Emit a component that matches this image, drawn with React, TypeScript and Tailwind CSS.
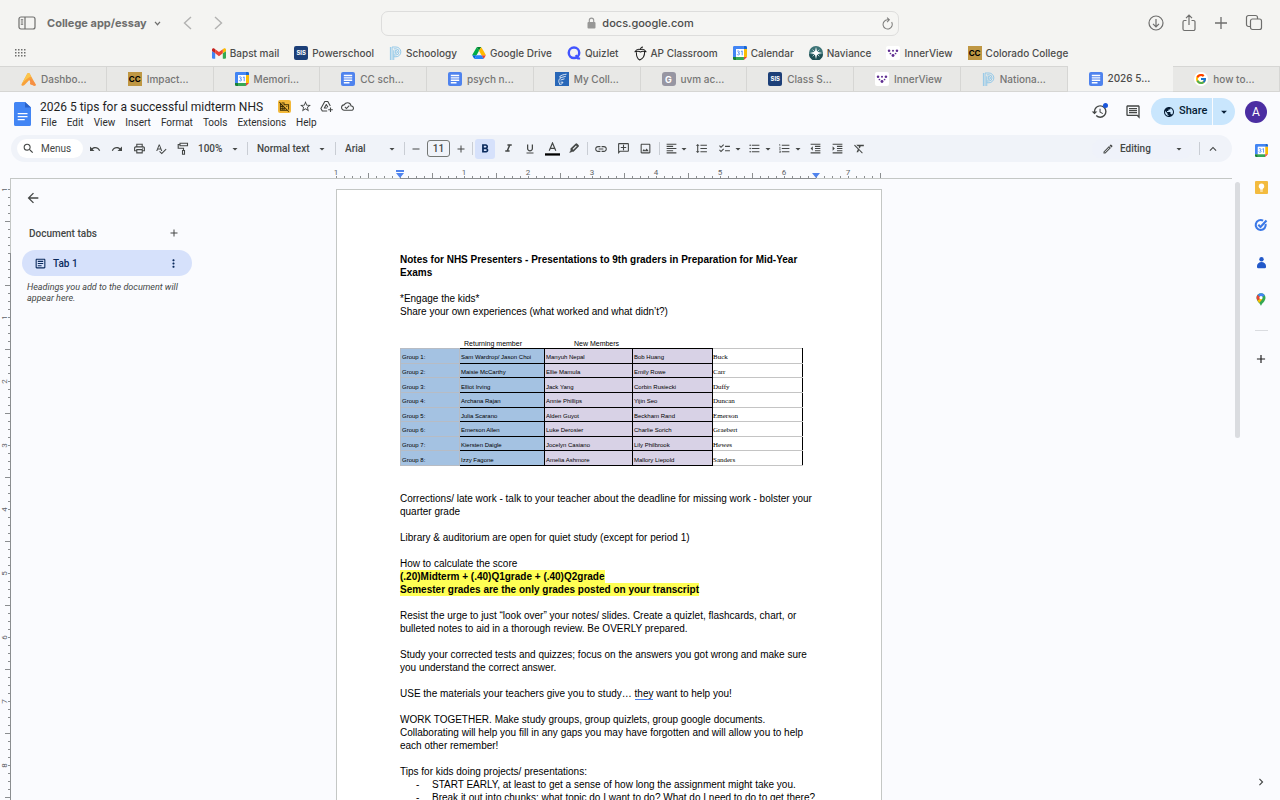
import React from "react";
import {
  MdAdd, MdArrowBack, MdArrowDropDown, MdChecklist, MdChevronRight, MdDomainDisabled,
  MdExpandLess, MdFormatAlignLeft, MdFormatBold, MdFormatClear, MdFormatIndentDecrease,
  MdFormatIndentIncrease, MdFormatItalic, MdFormatLineSpacing, MdFormatListBulleted,
  MdFormatListNumbered, MdFormatUnderlined, MdHistory, MdLink, MdMoreVert,
  MdOutlineAddComment, MdOutlineArticle, MdOutlineCloudDone,
  MdOutlineComment, MdOutlineEdit, MdOutlineImage, MdOutlinePrint, MdPublic, MdRedo,
  MdRemove, MdSearch, MdSpellcheck, MdStarOutline, MdUndo,
} from "react-icons/md";
import { FcGoogle } from "react-icons/fc";

/* ---------- site icons ---------- */

const GmailIcon = () => (
  <svg viewBox="0 0 24 18" className="h-[11px] w-[14px] shrink-0">
    <path fill="#4285f4" d="M1.6 18h3.9V8.6L0 4.5v11.9C0 17.300.7 18 1.600 18z" />
    <path fill="#34a853" d="M18.500 18h3.900c.9 0 1.600-.7 1.600-1.600V4.500l-5.500 4.100z" />
    <path fill="#fbbc04" d="M18.500 1.600v7L24 4.500V2.300c0-2-2.300-3.200-3.900-2z" />
    <path fill="#ea4335" d="M5.500 8.600v-7L12 6.500l6.500-4.900v7L12 13.500z" />
    <path fill="#c5221f" d="M0 2.300v2.200l5.500 4.100v-7L3.900.300C2.300-.9 0 .3 0 2.300z" />
  </svg>
);

const SisIcon = () => (
  <span className="flex size-[14px] shrink-0 items-center justify-center rounded-[2px] bg-[#1c3f78] text-[6px] leading-none font-bold text-white">
    SIS
  </span>
);

const CcIcon = () => (
  <span className="flex size-[14px] shrink-0 items-center justify-center bg-[#bf9743] font-['Inter',sans-serif] text-[8px] leading-none font-bold text-black">
    CC
  </span>
);

const GrayGIcon = () => (
  <span className="flex size-[14px] shrink-0 items-center justify-center rounded-[3px] bg-[#9796a2] text-[9px] leading-none font-bold text-white">
    G
  </span>
);

const PowerIcon = () => (
  <svg viewBox="0 0 14 16" className="h-[15px] w-[13px] shrink-0" fill="none" stroke="#8cc6e8" strokeWidth="1">
    <path d="M1.500 1v14M3.300 1v14M5.100 4.500V15" />
    <path d="M3.300 1H7.500a5 5 0 0 1 0 10.500H5.100" />
    <path d="M5.100 3H7.500a3.200 3.200 0 0 1 0 6.600H5.100" />
    <path d="M6.800 4.800h.8a1.500 1.500 0 0 1 0 3h-.8z" />
  </svg>
);

const DriveIcon = () => (
  <svg viewBox="0 0 87 78" className="h-[12px] w-[14px] shrink-0">
    <path fill="#0066da" d="M6.600 66.900l3.900 6.600c.8 1.400 2 2.500 3.300 3.300L27.500 53H0c0 1.500.4 3.100 1.200 4.500z" />
    <path fill="#00ac47" d="M43.600 25L29.900 1.200c-1.300.8-2.500 1.900-3.300 3.300L1.200 48.500C.4 49.900 0 51.500 0 53h27.500z" />
    <path fill="#ea4335" d="M73.500 76.800c1.400-.8 2.500-1.900 3.300-3.300l9.300-16c.8-1.400 1.200-3 1.200-4.500H59.800l5.900 11.500z" />
    <path fill="#00832d" d="M43.600 25L57.400 1.200C56 .4 54.500 0 52.900 0H34.400c-1.600 0-3.200.4-4.500 1.200z" />
    <path fill="#2684fc" d="M59.800 53H27.500L13.800 76.800c1.300.8 2.900 1.200 4.500 1.200H69c1.600 0 3.200-.4 4.500-1.200z" />
    <path fill="#ffba00" d="M73.400 26.500L60.700 4.500c-.8-1.400-2-2.500-3.300-3.300L43.600 25l16.200 28h27.500c0-1.500-.4-3.100-1.200-4.500z" />
  </svg>
);

const QuizletIcon = () => (
  <svg viewBox="0 0 16 16" className="size-[14px] shrink-0" fill="none" stroke="#4255ff">
    <circle cx="8" cy="7.800" r="6" strokeWidth="2.800" />
    <path d="M10 10.500l2.500 3.700h2.500" strokeWidth="2.400" />
  </svg>
);

const AcornIcon = () => (
  <svg viewBox="0 0 14 16" className="h-[15px] w-[13px] shrink-0" fill="none" stroke="#1e1e1e" strokeWidth="1.100" strokeLinejoin="round">
    <path d="M1 6.200C2.500 3.800 5 3.200 7 3.800c2-.8 4.500-.1 6 2.400-3-1.200-4.600-1-6 .2-1.400-1.200-3-1.400-6-.2z" />
    <path d="M2.600 6.600c-.2 4 1.200 7 3.600 8.400 3-1.400 5.400-4.400 5.200-8.700M7 3.800C7 2.200 8 1 9.700.900" />
  </svg>
);

const CalendarIcon = ({ className = "size-[14px]" }: { className?: string }) => (
  <svg viewBox="0 0 16 16" className={`${className} shrink-0`}>
    <path fill="#4285f4" d="M1.500 0H12.500V3.500H3.500V12.500H0V1.500A1.500 1.500 0 0 1 1.500 0z" />
    <path fill="#1967d2" d="M12.500 0h2A1.500 1.500 0 0 1 16 1.500v2h-3.500z" />
    <path fill="#fbbc04" d="M12.500 3.500H16v9h-3.500z" />
    <path fill="#34a853" d="M3.500 12.500h9V16h-9z" />
    <path fill="#188038" d="M0 12.500h3.500V16h-2A1.500 1.500 0 0 1 0 14.500z" />
    <path fill="#ea4335" d="M12.500 12.500H16L12.500 16z" />
    <path fill="#fff" d="M3.500 3.500h9v9h-9z" />
    <path fill="none" stroke="#4285f4" strokeWidth="1" d="M4.800 6.200c.3-.8 2.500-.9 2.500.500 0 .8-.7 1.100-1.300 1.100.8 0 1.500.4 1.500 1.300 0 1.500-2.500 1.500-2.900.3M9 6.400l1.500-.8v5" />
  </svg>
);

const NavianceIcon = () => (
  <svg viewBox="0 0 16 16" className="size-[14px] shrink-0">
    <circle cx="8" cy="8" r="8" fill="#3c7376" />
    <path fill="#1f5054" d="M0 9a8 8 0 0 0 16 0l-8 1.500z" />
    <path fill="#fff" d="M8 1l1.300 5.700L15 8l-5.700 1.300L8 15 6.700 9.300 1 8l5.700-1.300z" />
    <path stroke="#fff" strokeWidth=".8" d="M4.200 4.200l7.600 7.600M11.800 4.200l-7.600 7.600" />
  </svg>
);

const InnerViewIcon = () => (
  <span className="flex size-[14px] shrink-0 items-center justify-center rounded-[2px] bg-white">
    <svg viewBox="0 0 14 14" className="size-[12px]" fill="#5f2d91">
      <circle cx="2.400" cy="4.300" r="1.500" />
      <circle cx="7" cy="4.300" r="1.200" />
      <circle cx="11.600" cy="4.300" r="1.500" />
      <circle cx="4" cy="7.600" r="1" />
      <circle cx="10" cy="7.600" r="1" />
      <circle cx="7" cy="10" r="1.700" />
    </svg>
  </span>
);

const OrangeIcon = () => (
  <svg viewBox="0 0 16 14" className="h-[13px] w-[15px] shrink-0">
    <path fill="#f8a13b" d="M6.500 1.200c.5-1.400 2.400-1.500 3 0L15.600 12c.5 1-.3 2-1.500 1.700L9.600 11.800c.7-1.600.5-3.200-.7-4.200L3.700 13c-1.400 1.400-3.900.9-3.200-1z" />
    <path fill="#f58f45" d="M15.600 12c.5 1-.3 2-1.500 1.700L9.600 11.800c.8-1.800.4-3.300-.7-4.200l1.200-1.200c2 .9 3.900 3 5.500 5.600z" />
    <path fill="#fbc64c" d="M6.500 1.200c.5-1.400 2.400-1.500 3 0l1.400 2.500C8 4.800 3.500 8 .6 11.900z" />
  </svg>
);

const DocsSquareIcon = () => (
  <svg viewBox="0 0 14 14" className="size-[14px] shrink-0">
    <rect width="14" height="14" rx="2" fill="#4f83ee" />
    <path stroke="#fff" strokeWidth="1.400" d="M2.800 3.500h8.400M2.800 5.900h8.400M2.800 8.300h8.400M2.800 10.700h5.700" />
  </svg>
);

const CollegeIcon = () => (
  <svg viewBox="0 0 14 14" className="size-[14px] shrink-0">
    <rect width="14" height="14" fill="#2867b8" />
    <path fill="none" stroke="#fff" strokeWidth=".8" d="M11.500 2.200C8.500 2.500 6 3.200 4.500 4.800l1.800.7M10.800 4.300L6.300 5.500C3.500 7 3 10 5 12M9.500 6.800L5.500 8M4 12c1.500.8 3.200.3 4-1.800H5.600" />
  </svg>
);

const GoogleIcon = () => (
  <span className="flex size-[14px] shrink-0 items-center justify-center rounded-full bg-white">
    <FcGoogle className="size-[12px]" />
  </span>
);

/* ---------- browser chrome ---------- */

const bookmarks: { label: string; icon: React.ReactNode }[] = [
  { label: "Bapst mail", icon: <GmailIcon /> },
  { label: "Powerschool", icon: <SisIcon /> },
  { label: "Schoology", icon: <PowerIcon /> },
  { label: "Google Drive", icon: <DriveIcon /> },
  { label: "Quizlet", icon: <QuizletIcon /> },
  { label: "AP Classroom", icon: <AcornIcon /> },
  { label: "Calendar", icon: <CalendarIcon /> },
  { label: "Naviance", icon: <NavianceIcon /> },
  { label: "InnerView", icon: <InnerViewIcon /> },
  { label: "Colorado College", icon: <CcIcon /> },
];

const tabs: { label: string; icon: React.ReactNode; active?: boolean }[] = [
  { label: "Dashbo...", icon: <OrangeIcon /> },
  { label: "Impact...", icon: <CcIcon /> },
  { label: "Memori...", icon: <CalendarIcon /> },
  { label: "CC sch...", icon: <DocsSquareIcon /> },
  { label: "psych n...", icon: <DocsSquareIcon /> },
  { label: "My Coll...", icon: <CollegeIcon /> },
  { label: "uvm ac...", icon: <GrayGIcon /> },
  { label: "Class S...", icon: <SisIcon /> },
  { label: "InnerView", icon: <InnerViewIcon /> },
  { label: "Nationa...", icon: <PowerIcon /> },
  { label: "2026 5...", icon: <DocsSquareIcon />, active: true },
  { label: "how to...", icon: <GoogleIcon /> },
];

function BrowserChrome() {
  return (
    <div className="shrink-0 bg-[#f4f4f2] font-['Inter',sans-serif] text-[#4c4c4b]">
      <div className="grid h-[40px] grid-cols-[1fr_518px_1fr] items-center pt-[6px]">
        <div className="flex items-center pl-[18px] text-[#6e6e6d]">
          <button aria-label="Sidebar">
            <svg viewBox="0 0 18 14" className="h-[14px] w-[18px]" fill="none" stroke="currentColor" strokeWidth="1.200">
              <rect x="1" y="1" width="16" height="12" rx="2" />
              <path d="M7 1v12M2.800 3.800h2.400M2.800 6h2.400M2.800 8.200h2.400" />
            </svg>
          </button>
          <button className="ml-[11px] flex items-center gap-[7px] text-[11px] font-bold">
            College app/essay
            <svg viewBox="0 0 8 6" className="h-[5px] w-[7px]" fill="none" stroke="currentColor" strokeWidth="1.500"><path d="M1 1l3 3.500L7 1" /></svg>
          </button>
          <button aria-label="Back" className="ml-[22px]">
            <svg viewBox="0 0 9 14" className="h-[14px] w-[9px]" fill="none" stroke="#b2b2b1" strokeWidth="1.400"><path d="M8 1L1.500 7 8 13" /></svg>
          </button>
          <button aria-label="Forward" className="ml-[22px]">
            <svg viewBox="0 0 9 14" className="h-[14px] w-[9px]" fill="none" stroke="#b2b2b1" strokeWidth="1.400"><path d="M1 1l6.500 6L1 13" /></svg>
          </button>
        </div>
        <div className="flex h-[25px] items-center rounded-[7px] border border-[#dddddc] bg-[#f5f5f3] px-[5px]">
          <span className="w-[12px]" />
          <span className="flex flex-1 items-center justify-center gap-[6px] text-[11px] font-medium text-[#4c4c4b]">
            <svg viewBox="0 0 9 12" className="h-[12px] w-[9px]">
              <rect x=".5" y="5" width="8" height="6.500" rx="1" fill="#979796" />
              <path d="M2.300 5.500V3.300a2.200 2.200 0 0 1 4.400 0v2.200" fill="none" stroke="#979796" strokeWidth="1.100" />
            </svg>
            docs.google.com
          </span>
          <button aria-label="Reload">
            <svg viewBox="0 0 12 14" className="h-[13px] w-[11px]" fill="none" stroke="#7c7c7b" strokeWidth="1.100">
              <path d="M10.500 5.500A5 5 0 1 1 6 3h1.500M5.500.700L8 3 5.500 5.500" />
            </svg>
          </button>
        </div>
        <div className="flex items-center justify-end gap-[17px] pr-[17px] text-[#6e6e6d]">
          <button aria-label="Downloads">
            <svg viewBox="0 0 16 16" className="size-[16px]" fill="none" stroke="currentColor" strokeWidth="1.200"><circle cx="8" cy="8" r="7" /><path d="M8 4v7.500M5 8.800l3 3 3-3" /></svg>
          </button>
          <button aria-label="Share page">
            <svg viewBox="0 0 16 18" className="h-[18px] w-[16px]" fill="none" stroke="currentColor" strokeWidth="1.200"><path d="M5.500 6.500H3.500A1.500 1.500 0 0 0 2 8v7a1.500 1.500 0 0 0 1.500 1.500h9A1.500 1.500 0 0 0 14 15V8a1.500 1.500 0 0 0-1.500-1.500h-2M8 11V1.500M5 4.200l3-3 3 3" /></svg>
          </button>
          <button aria-label="New tab">
            <svg viewBox="0 0 14 14" className="size-[14px]" fill="none" stroke="currentColor" strokeWidth="1.300"><path d="M7 1v12M1 7h12" /></svg>
          </button>
          <button aria-label="Tab overview">
            <svg viewBox="0 0 18 18" className="size-[18px]" fill="none" stroke="currentColor" strokeWidth="1.200"><rect x="5.500" y="5" width="11" height="10.500" rx="2" /><path d="M5.500 12.500H3.500a2 2 0 0 1-2-2V3.500a2 2 0 0 1 2-2h7a2 2 0 0 1 2 2V5" /></svg>
          </button>
        </div>
      </div>
      <div className="grid h-[26px] grid-cols-[40px_1fr_40px] items-center">
        <button aria-label="Show all bookmarks" className="pl-[15px]">
          <svg viewBox="0 0 11 8" className="h-[8px] w-[11px]" fill="#6e6e6d">
            {[0, 1, 2, 3].flatMap((c) => [0, 1, 2].map((r) => <rect key={`${c}-${r}`} x={c * 3} y={r * 3} width="1.500" height="1.500" />))}
          </svg>
        </button>
        <nav className="flex items-center justify-center gap-[15px] text-[10px] font-medium whitespace-nowrap">
          {bookmarks.map((b) => (
            <a key={b.label} href="#" className="flex items-center gap-[4px]">{b.icon}{b.label}</a>
          ))}
        </nav>
        <span />
      </div>
      <div role="tablist" className="flex h-[26px]">
        {tabs.map((t) => (
          <button
            key={t.label}
            role="tab"
            aria-selected={!!t.active}
            className={
              t.active
                ? "flex flex-1 items-center gap-[5px] border-b border-[#dfe1e3] pl-[21px] text-[10px] font-medium text-[#4c4c4b]"
                : "flex flex-1 items-center gap-[5px] border-t border-r border-b border-[#d6d6d4] bg-[#e8e8e6] pl-[21px] text-[10px] font-medium text-[#757574]"
            }
          >
            {t.icon}{t.label}
          </button>
        ))}
      </div>
    </div>
  );
}

/* ---------- docs header ---------- */

const menus = ["File", "Edit", "View", "Insert", "Format", "Tools", "Extensions", "Help"];

function DocsHeader() {
  return (
    <header className="flex h-[43px] shrink-0 items-start pt-[6px] pr-[13px] pl-[14px]">
      <a href="#" aria-label="Docs home" className="mt-[4px]">
        <svg viewBox="0 0 17 24" className="h-[24px] w-[17px]">
          <path fill="#4285f4" d="M1.500 0H11l6 5.500v17A1.500 1.500 0 0 1 15.500 24h-14A1.500 1.500 0 0 1 0 22.500v-21A1.500 1.500 0 0 1 1.500 0z" />
          <path fill="#2a62c9" d="M11 0l6 5.500h-6z" />
          <path stroke="#fff" strokeWidth="1.300" d="M3.700 11.700h9.800M3.700 14.700h9.800M3.700 17.700h7" />
        </svg>
      </a>
      <div className="ml-[9px]">
        <div className="flex h-[17px] items-center text-[#444746]">
          <h1 className="font-['Roboto',sans-serif] text-[12px] text-[#1f1f1f]">2026 5 tips for a successful midterm NHS</h1>
          <span className="ml-[15px] flex size-[13px] items-center justify-center rounded-[2px] bg-[#f2b93b] text-[#3b2c05]"><MdDomainDisabled className="size-[11px]" /></span>
          <button aria-label="Star" className="ml-[8px]"><MdStarOutline className="size-[13px]" /></button>
          <button aria-label="Add to Drive" className="ml-[8px]">
            <svg viewBox="0 0 13 13" className="size-[13px]" fill="none" stroke="currentColor" strokeWidth="1.100" strokeLinejoin="round">
              <path d="M7.200 11H2.300L.9 8.500 4.800 1.500h3l2.500 4.500M7.200 8H4.300L6.300 4.500l1.600 2.800M10.500 7.500v4.600M8.200 9.800h4.600" />
            </svg>
          </button>
          <button aria-label="Document status" className="ml-[8px]"><MdOutlineCloudDone className="size-[13px]" /></button>
        </div>
        <nav className="flex h-[14px] items-center gap-[10px] pl-[1px] text-[10px] text-[#2c2d2e]">
          {menus.map((m) => <button key={m}>{m}</button>)}
        </nav>
      </div>
      <div className="ml-auto flex h-[27px] items-center text-[#444746]">
        <button aria-label="Version history" className="relative">
          <MdHistory className="size-[17px]" />
          <span className="absolute top-0 right-0 size-[5px] rounded-full bg-[#1a56db]" />
        </button>
        <button aria-label="Comments" className="ml-[17px]"><MdOutlineComment className="size-[16px]" /></button>
        <div className="ml-[10px] flex h-[27px] items-stretch gap-px text-[#061d35]">
          <button className="flex w-[61px] items-center gap-[4px] rounded-l-full bg-[#c9e6fd] pl-[12px] text-[11px] font-medium"><MdPublic className="size-[12px]" />Share</button>
          <button aria-label="Share options" className="flex w-[22px] items-center justify-center rounded-r-full bg-[#c9e6fd]"><MdArrowDropDown className="size-[14px]" /></button>
        </div>
        <button aria-label="Account" className="ml-[10px] flex size-[22px] items-center justify-center rounded-full bg-[#4b2ea2] text-[12px] text-white">A</button>
      </div>
    </header>
  );
}

/* ---------- toolbar ---------- */

function Tool({ label, children }: { label: string; children: React.ReactNode }) {
  return <button aria-label={label} className="flex h-[20px] w-[22px] items-center justify-center">{children}</button>;
}

const Divider = () => <span className="h-[13px] w-px shrink-0 bg-[#c9cdd4]" />;
const Caret = () => <MdArrowDropDown className="pointer-events-none size-[12px] shrink-0" />;

function Picker({ label, value, className }: { label: string; value: string; className: string }) {
  return (
    <label className="flex items-center">
      <select aria-label={label} className={`${className} appearance-none bg-transparent`}>
        <option>{value}</option>
      </select>
      <Caret />
    </label>
  );
}

function Toolbar() {
  return (
    <div className="mr-[10px] ml-[11px] flex h-[27px] shrink-0 items-center rounded-full bg-[#f0f3f9] pl-[6px] text-[10px] font-medium text-[#444746]">
      <button className="flex h-[19px] w-[66px] items-center gap-[6px] rounded-full bg-white pl-[5px] font-normal"><MdSearch className="size-[13px]" />Menus</button>
      <div className="ml-[1px] flex">
        <Tool label="Undo"><MdUndo className="size-[12px]" /></Tool>
        <Tool label="Redo"><MdRedo className="size-[12px]" /></Tool>
        <Tool label="Print"><MdOutlinePrint className="size-[13px]" /></Tool>
        <Tool label="Spelling"><MdSpellcheck className="size-[12px]" /></Tool>
        <Tool label="Paint format">
          <svg viewBox="0 0 12 13" className="h-[13px] w-[12px]" fill="none" stroke="currentColor" strokeWidth="1.100"><path d="M3 1.200h7.500v2.600H3zM3 2.500H1.200v3.700h5.300v2.300M5.500 8.500h2v3.700h-2z" /></svg>
        </Tool>
      </div>
      <div className="ml-[4px] flex items-center">
        <Picker label="Zoom" value="100%" className="w-[31px]" />
        <span className="mr-[9px] ml-[6px] flex"><Divider /></span>
        <Picker label="Styles" value="Normal text" className="w-[59px]" />
        <span className="mr-[9px] ml-[7px] flex"><Divider /></span>
        <Picker label="Font" value="Arial" className="w-[41px]" />
        <span className="ml-[6px] flex"><Divider /></span>
      </div>
      <Tool label="Decrease font size"><MdRemove className="size-[12px]" /></Tool>
      <input aria-label="Font size" defaultValue="11" className="h-[17px] w-[23px] rounded-[3px] border border-[#747775] bg-transparent text-center" />
      <Tool label="Increase font size"><MdAdd className="size-[12px]" /></Tool>
      <Divider />
      <button aria-label="Bold" className="mx-[2px] flex size-[20px] items-center justify-center rounded-[3px] bg-[#d6e1fb] text-[#0a2a5c]"><MdFormatBold className="size-[14px]" /></button>
      <Tool label="Italic"><MdFormatItalic className="size-[13px]" /></Tool>
      <Tool label="Underline"><MdFormatUnderlined className="size-[12px]" /></Tool>
      <Tool label="Text color">
        <svg viewBox="0 0 15 14" className="h-[14px] w-[15px]"><path d="M4.200 8.800L7.500 1l3.300 7.800M5.300 6.400h4.400" fill="none" stroke="currentColor" strokeWidth="1.200" /><path d="M0 11.300h15v2.300H0z" fill="#000" /></svg>
      </Tool>
      <Tool label="Highlight color">
        <svg viewBox="0 0 12 12" className="size-[12px]"><path d="M2.500 5.500L7.500.800a1.200 1.200 0 0 1 1.700 0l1.300 1.300a1.200 1.200 0 0 1 0 1.700L5.500 8.800H3.800l-.8.800H1l1.500-1.500z" fill="currentColor" /><path d="M4.500 6l3.500-3.500.8.800-3.500 3.500z" fill="#f0f3f9" /></svg>
      </Tool>
      <span className="mx-[2px] flex"><Divider /></span>
      <Tool label="Insert link"><MdLink className="size-[14px]" /></Tool>
      <Tool label="Add comment"><MdOutlineAddComment className="size-[13px] -scale-x-100" /></Tool>
      <Tool label="Insert image"><MdOutlineImage className="size-[13px]" /></Tool>
      <span className="mr-[5px] ml-[3px] flex"><Divider /></span>
      <button aria-label="Align" className="flex items-center"><MdFormatAlignLeft className="size-[13px]" /><Caret /></button>
      <Tool label="Line spacing"><MdFormatLineSpacing className="size-[13px]" /></Tool>
      <button aria-label="Checklist" className="ml-[6px] flex items-center gap-[1px]"><MdChecklist className="size-[13px]" /><Caret /></button>
      <button aria-label="Bulleted list" className="ml-[4px] flex items-center gap-[1px]"><MdFormatListBulleted className="size-[13px]" /><Caret /></button>
      <button aria-label="Numbered list" className="ml-[4px] flex items-center gap-[1px]"><MdFormatListNumbered className="size-[13px]" /><Caret /></button>
      <Tool label="Decrease indent"><MdFormatIndentDecrease className="size-[13px]" /></Tool>
      <Tool label="Increase indent"><MdFormatIndentIncrease className="size-[13px]" /></Tool>
      <Tool label="Clear formatting"><MdFormatClear className="size-[13px]" /></Tool>
      <div className="mr-[7px] ml-auto flex h-[20px] items-center gap-[6px] rounded-full bg-[#eff2fa] pr-[7px] pl-[10px]">
        <MdOutlineEdit className="size-[12px]" />
        <Picker label="Mode" value="Editing" className="w-[53px]" />
      </div>
      <Divider />
      <button aria-label="Hide menus" className="mr-[12px] ml-[6px]"><MdExpandLess className="size-[14px]" /></button>
    </div>
  );
}

/* ---------- rulers (64px to an inch, eight ticks each) ---------- */

const hTicks = Array.from({ length: 69 }, (_, i) => i);
const vTicks = Array.from({ length: 78 }, (_, i) => i);

function HorizontalRuler() {
  return (
    <div className="mr-[10px] ml-[10px] shrink-0 border-b border-[#c4c7c5] pl-[320px]">
      <svg viewBox="0 0 560 17" className="-mb-px block h-[17px] w-[560px] font-['Roboto',sans-serif]">
        {hTicks.map((i) => (
          <rect key={i} x={6 + i * 8} y={i % 8 === 4 ? 11 : 14} width="1" height={i % 8 === 4 ? 5 : 2} fill="#8b8e90" />
        ))}
        <rect x="70" y="16" width="416" height="1" fill="#8b8e90" />
        {[1, 0, 1, 2, 3, 4, 5, 6, 7].map((n, i) =>
          n ? <text key={i} x={6 + i * 64} y="13" textAnchor="middle" fontSize="8" fill="#5f6368">{n}</text> : null
        )}
        <path fill="#4f83ee" d="M66 8h8v2h-8zM66 11h8l-4 5zM482 11h8l-4 5z" />
      </svg>
    </div>
  );
}

function VerticalRuler() {
  return (
    <div className="w-[11px] shrink-0 border-r border-[#c4c7c5]">
      <svg viewBox="0 0 11 621" className="-mr-px block h-[621px] w-[11px] max-w-none font-['Roboto',sans-serif]">
        {vTicks.map((i) => (
          <rect key={i} x={i % 8 === 4 ? 5 : 8} y={10 + i * 8} width={i % 8 === 4 ? 5 : 2} height="1" fill="#8b8e90" />
        ))}
        <rect x="10" y="74" width="1" height="547" fill="#8b8e90" />
        {[1, 0, 1, 2, 3, 4, 5, 6, 7, 8].map((n, i) =>
          n ? <text key={i} transform={`translate(7 ${10.5 + i * 64}) rotate(-90)`} textAnchor="middle" fontSize="8" fill="#5f6368">{n}</text> : null
        )}
      </svg>
    </div>
  );
}

/* ---------- outline ---------- */

function Outline() {
  return (
    <aside className="w-[325px] shrink-0 pt-[11px] pl-[11px] text-[#444746]">
      <button aria-label="Close outline" className="ml-[3px] flex"><MdArrowBack className="size-[16px]" /></button>
      <div className="mt-[20px] flex h-[14px] w-[158px] items-center justify-between pl-[7px]">
        <h2 className="text-[10px] font-medium">Document tabs</h2>
        <button aria-label="Add tab"><MdAdd className="size-[12px]" /></button>
      </div>
      <div className="mt-[10px] flex h-[26px] w-[170px] items-center rounded-full bg-[#d6e1fb] px-[12px] text-[#0a2a5c]">
        <MdOutlineArticle className="size-[13px]" />
        <a href="#" className="ml-[6px] flex-1 text-[10px] font-medium">Tab 1</a>
        <button aria-label="Tab options"><MdMoreVert className="size-[13px]" /></button>
      </div>
      <p className="mt-[6px] w-[165px] pl-[5px] text-[9px] leading-[11px] italic">Headings you add to the document will appear here.</p>
    </aside>
  );
}

/* ---------- document ---------- */

const groups = [
  ["Sam Wardrop/ Jason Choi", "Manyuh Nepal", "Bob Huang", "Buck"],
  ["Maisie McCarthy", "Ellie Mamula", "Emily Rowe", "Carr"],
  ["Elliot Irving", "Jack Yang", "Corbin Rusiecki", "Duffy"],
  ["Archana Rajan", "Annie Phillips", "Yijin Seo", "Duncan"],
  ["Julia Scarano", "Alden Guyot", "Beckham Rand", "Emerson"],
  ["Emerson Allen", "Luke Derosier", "Charlie Sorich", "Graebert"],
  ["Kiersten Daigle", "Jocelyn Casiano", "Lily Philbrook", "Hewes"],
  ["Izzy Fagone", "Amelia Ashmore", "Mallory Liepold", "Sanders"],
];

function GroupTable() {
  return (
    <div className="pt-[21px] pb-[26px]">
      <div className="flex h-[9px] gap-[52px] pl-[64px] text-[7px] leading-[9px]"><span>Returning member</span><span>New Members</span></div>
      <table className="h-[118px] w-[402px] table-fixed border-collapse text-[6px] leading-[8px]">
        <colgroup><col className="w-[59px]" /><col className="w-[85px]" /><col className="w-[88px]" /><col className="w-[80px]" /><col className="w-[90px]" /></colgroup>
        <tbody>
          {groups.map((g, i) => (
            <tr key={i}>
              <th scope="row" className="border border-[#b7bcc4] bg-[#a4c2e2] p-0 pt-[3px] pl-[1px] text-left font-normal">Group {i + 1}:</th>
              <td className="border border-black bg-[#a4c2e2] p-0 pt-[3px] pl-[1px]">{g[0]}</td>
              <td className="border border-black bg-[#d8d2e6] p-0 pt-[3px] pl-[1px]">{g[1]}</td>
              <td className="border border-black bg-[#d8d2e6] p-0 pt-[3px] pl-[1px]">{g[2]}</td>
              <td className="border-y border-r border-y-[#c4c4c4] border-r-black p-0 pt-[3px] font-['Liberation_Serif',serif] text-[7px]">{g[3]}</td>
            </tr>
          ))}
        </tbody>
      </table>
    </div>
  );
}

function Page() {
  return (
    <article className="mt-[10px] w-[546px] shrink-0 self-stretch border border-b-0 border-[#c4c7c5] bg-white pt-[63px] pr-[63px] pl-[63px] font-['Liberation_Sans',Arial,sans-serif] text-[10px] leading-[13px] text-black">
      <p className="mb-[13px] font-bold">Notes for NHS Presenters - Presentations to 9th graders in Preparation for Mid-Year Exams</p>
      <p>*Engage the kids*</p>
      <p>Share your own experiences (what worked and what didn’t?)</p>
      <GroupTable />
      <p className="mb-[13px]">Corrections/ late work - talk to your teacher about the deadline for missing work - bolster your quarter grade</p>
      <p className="mb-[13px]">Library &amp; auditorium are open for quiet study (except for period 1)</p>
      <p>How to calculate the score</p>
      <p className="mb-[13px] font-bold">
        <mark className="bg-[#ffff54] py-px">(.20)Midterm + (.40)Q1grade + (.40)Q2grade</mark><br />
        <mark className="bg-[#ffff54] py-px">Semester grades are the only grades posted on your transcript</mark>
      </p>
      <p className="mb-[13px]">Resist the urge to just “look over” your notes/ slides. Create a quizlet, flashcards, chart, or bulleted notes to aid in a thorough review. Be OVERLY prepared.</p>
      <p className="mb-[13px]">Study your corrected tests and quizzes; focus on the answers you got wrong and make sure you understand the correct answer.</p>
      <p className="mb-[13px]">USE the materials your teachers give you to study… <span className="border-b border-[#4f83ee]">they</span> want to help you!</p>
      <p className="mb-[13px]">WORK TOGETHER. Make study groups, group quizlets, group google documents.<br />Collaborating will help you fill in any gaps you may have forgotten and will allow you to help each other remember!</p>
      <p>Tips for kids doing projects/ presentations:</p>
      <ul className="whitespace-nowrap">
        <li className="flex"><span className="w-[32px] pl-[16px]">-</span>START EARLY, at least to get a sense of how long the assignment might take you.</li>
        <li className="flex"><span className="w-[32px] pl-[16px]">-</span>Break it out into chunks: what topic do I want to do? What do I need to do to get there?</li>
      </ul>
    </article>
  );
}

/* ---------- side rail ---------- */

function SideRail() {
  return (
    <aside className="flex w-[38px] shrink-0 flex-col items-center gap-[24px] pt-[9px] pb-[11px]">
      <button aria-label="Calendar"><CalendarIcon className="block size-[13px]" /></button>
      <button aria-label="Keep">
        <svg viewBox="0 0 13 13" className="block size-[13px]"><rect width="13" height="13" rx="1" fill="#f3bb3f" /><circle cx="6.500" cy="5.300" r="2.700" fill="#fff" /><path d="M5.200 7h2.600v1.800H5.200zM5.200 9.500h2.600v1H5.200z" fill="#fff" /></svg>
      </button>
      <button aria-label="Tasks">
        <svg viewBox="0 0 14 14" className="block size-[14px]" fill="none" stroke="#3b78e7" strokeWidth="2.100"><path d="M11.600 6a5 5 0 1 1-2.500-3.400" /><path d="M4.300 6.700l2.200 2.200L12.500 2.500" /></svg>
      </button>
      <button aria-label="Contacts">
        <svg viewBox="0 0 13 13" className="block size-[13px]" fill="#2258c9"><circle cx="6.500" cy="3.200" r="2.200" /><path d="M2 10a4.500 4 0 0 1 9 0v1a1.200 1.200 0 0 1-1.200 1.200H3.200A1.200 1.200 0 0 1 2 11z" /></svg>
      </button>
      <button aria-label="Maps">
        <svg viewBox="0 0 10 13" className="block h-[13px] w-[10px]">
          <path fill="#34a853" d="M5 13C4.600 10.500.5 8.500.5 4.700a4.500 4.500 0 0 1 9 0C9.500 8.500 5.400 10.500 5 13z" />
          <path fill="#fbbc04" d="M1.500 7.500L5 4.700l1.200 1.800-3 3.500z" />
          <path fill="#ea4335" d="M5 4.700L1.500 7.500C.3 5.600.2 3.300 1.600 1.700z" />
          <path fill="#4285f4" d="M1.600 1.700A4.500 4.500 0 0 1 8.800 2.200L5 4.700z" />
          <circle cx="5" cy="4.700" r="1.600" fill="#fff" />
        </svg>
      </button>
      <span className="h-px w-[13px] bg-[#dadce0]" />
      <button aria-label="Get add-ons" className="-mt-[3px] text-[#1f1f1f]"><MdAdd className="size-[14px]" /></button>
      <button aria-label="Hide side panel" className="mt-auto text-[#444746]"><MdChevronRight className="size-[14px]" /></button>
    </aside>
  );
}

export default function App() {
  return (
    <div className="flex h-screen flex-col overflow-hidden bg-[#fafbfe]">
      <BrowserChrome />
      <div className="flex min-h-0 flex-1 flex-col font-['Roboto',sans-serif]">
        <DocsHeader />
        <div className="flex min-h-0 flex-1">
          <div className="flex min-w-0 flex-1 flex-col">
            <Toolbar />
            <HorizontalRuler />
            <div className="flex min-h-0 flex-1">
              <VerticalRuler />
              <Outline />
              <main className="flex min-w-0 flex-1 items-start overflow-hidden"><Page /></main>
              <div className="w-[7px] shrink-0 pt-[3px]"><div className="h-[256px] w-[5px] rounded-full bg-[#dadce0]" /></div>
            </div>
          </div>
          <SideRail />
        </div>
      </div>
    </div>
  );
}
